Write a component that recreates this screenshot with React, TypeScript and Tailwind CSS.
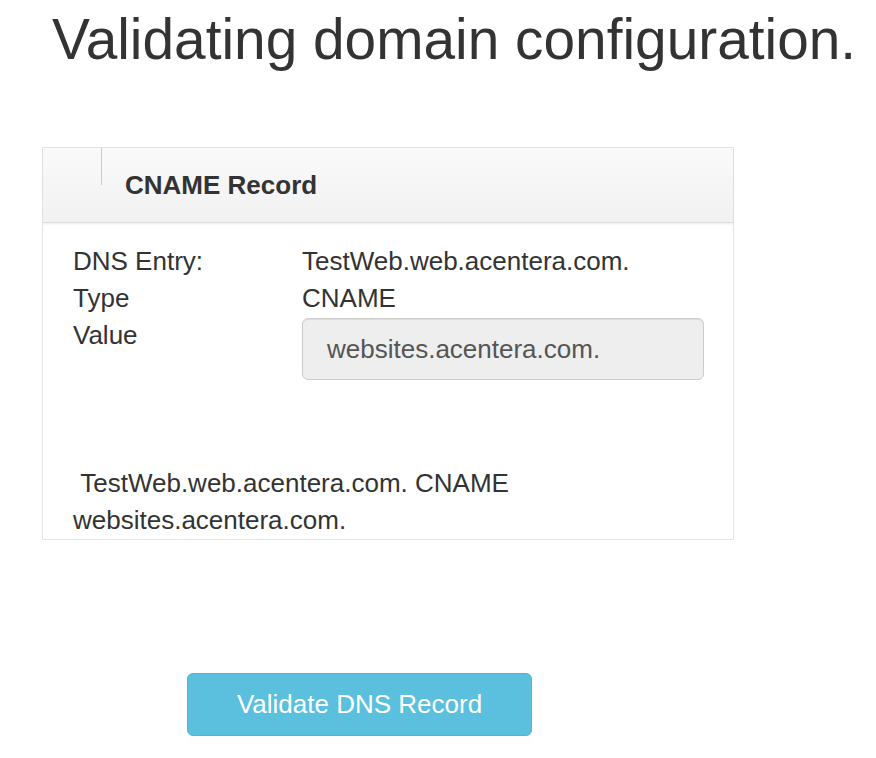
export default function App() {
  return (
    <div className="w-[876px] h-[758px] bg-white text-[#333] font-['Liberation_Sans',Arial,sans-serif] overflow-hidden">
      <h1 className="pl-[52px] pt-[6px] text-[56.8px] leading-[68px] font-normal text-[#333]">
        Validating domain configuration.
      </h1>

      <div className="ml-[42px] mt-[73px] w-[692px] border border-[#e5e5e5] bg-white">
        <div className="h-[75px] flex items-center border-b border-[#ddd] bg-gradient-to-b from-[#fafafa] to-[#f1f1f1] shadow-[0_1px_2px_rgba(0,0,0,0.08)]">
          <div className="self-start ml-[58px] w-px h-[37px] bg-[#ccc]" />
          <h3 className="ml-[23px] text-[26px] font-bold text-[#333]">CNAME Record</h3>
        </div>

        <div className="px-[30px] pt-[20px] text-[26px] leading-[37px]">
          <div className="grid grid-cols-[229px_1fr]">
            <div>DNS Entry:</div>
            <div>TestWeb.web.acentera.com.</div>
            <div>Type</div>
            <div>CNAME</div>
            <div>Value</div>
            <div className="pt-[1px]">
              <div className="w-[402px] h-[62px] flex items-center pl-[24px] rounded-[6px] border border-[#ccc] bg-[#eee] text-[#555] shadow-[inset_0_1px_1px_rgba(0,0,0,0.075)]">
                websites.acentera.com.
              </div>
            </div>
          </div>

          <p className="mt-[85px]">
            &nbsp;TestWeb.web.acentera.com. CNAME websites.acentera.com.
          </p>
        </div>
      </div>

      <div className="mt-[133px] ml-[187px]">
        <button className="w-[345px] h-[63px] rounded-[6px] border border-[#46b8da] bg-[#5bc0de] text-white text-[26px]">
          Validate DNS Record
        </button>
      </div>
    </div>
  );
}
